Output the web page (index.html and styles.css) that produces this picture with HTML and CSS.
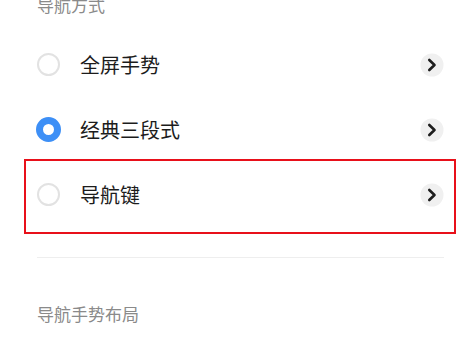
FILE: index.html
```html
<!DOCTYPE html>
<html lang="zh">
<head>
<meta charset="utf-8">
<link rel="stylesheet" href="styles.css">
</head>
<body>
<div class="page">
  <div class="section-title first">导航方式</div>
  <div class="options">
    <div class="row">
      <span class="radio-slot"><span class="radio"></span></span>
      <span class="label">全屏手势</span>
      <svg class="chev" viewBox="0 0 24 24" width="24" height="24"><circle cx="12" cy="12" r="11.5" fill="#f0f0f0"/><path d="M9.3 7 L14.5 12 L9.3 17" fill="none" stroke="#1e1e1e" stroke-width="2.6" stroke-linecap="round" stroke-linejoin="round"/></svg>
    </div>
    <div class="row">
      <span class="radio-slot"><span class="radio checked"></span></span>
      <span class="label">经典三段式</span>
      <svg class="chev" viewBox="0 0 24 24" width="24" height="24"><circle cx="12" cy="12" r="11.5" fill="#f0f0f0"/><path d="M9.3 7 L14.5 12 L9.3 17" fill="none" stroke="#1e1e1e" stroke-width="2.6" stroke-linecap="round" stroke-linejoin="round"/></svg>
    </div>
    <div class="row highlighted">
      <span class="radio-slot"><span class="radio"></span></span>
      <span class="label">导航键</span>
      <svg class="chev" viewBox="0 0 24 24" width="24" height="24"><circle cx="12" cy="12" r="11.5" fill="#f0f0f0"/><path d="M9.3 7 L14.5 12 L9.3 17" fill="none" stroke="#1e1e1e" stroke-width="2.6" stroke-linecap="round" stroke-linejoin="round"/></svg>
    </div>
  </div>
  <div class="divider"></div>
  <div class="section-title">导航手势布局</div>
</div>
</body>
</html>
```
FILE: styles.css
```css
html, body {
  margin: 0;
  padding: 0;
  background: #ffffff;
  overflow: hidden;
}
body {
  font-family: "Noto Sans CJK SC", "Noto Sans", sans-serif;
  width: 467px;
  height: 338px;
}
.page {
  padding: 0 23px 0 36px;
}
.section-title {
  font-size: 17px;
  line-height: 24px;
  height: 24px;
  color: #8a8a8a;
  padding-left: 1px;
}
.section-title.first {
  margin-top: -7px;
  margin-bottom: 15px;
}
.options {
  display: flex;
  flex-direction: column;
}
.row {
  position: relative;
  height: 65px;
  display: flex;
  align-items: center;
}
.row.highlighted::after {
  content: "";
  position: absolute;
  left: -12px;
  right: -12px;
  top: -3px;
  bottom: -7px;
  border: 2px solid #e8101a;
  pointer-events: none;
}
.radio-slot {
  width: 25px;
  height: 25px;
  display: flex;
  align-items: center;
  justify-content: center;
  flex: none;
}
.radio {
  box-sizing: border-box;
  width: 23px;
  height: 23px;
  border-radius: 50%;
  border: 2px solid #e2e2e2;
}
.radio.checked {
  width: 25px;
  height: 25px;
  border: 7px solid #3d8ff6;
}
.label {
  margin-left: 19px;
  font-size: 20px;
  line-height: 28px;
  font-weight: 400;
  color: #1c1c1c;
  flex: 1;
}
.chev {
  flex: none;
  width: 24px;
  height: 24px;
}
.divider {
  margin-top: 30px;
  height: 1px;
  background: #eeeeee;
  margin-left: 1px;
}
.section-title:last-child {
  margin-top: 44px;
}
```
